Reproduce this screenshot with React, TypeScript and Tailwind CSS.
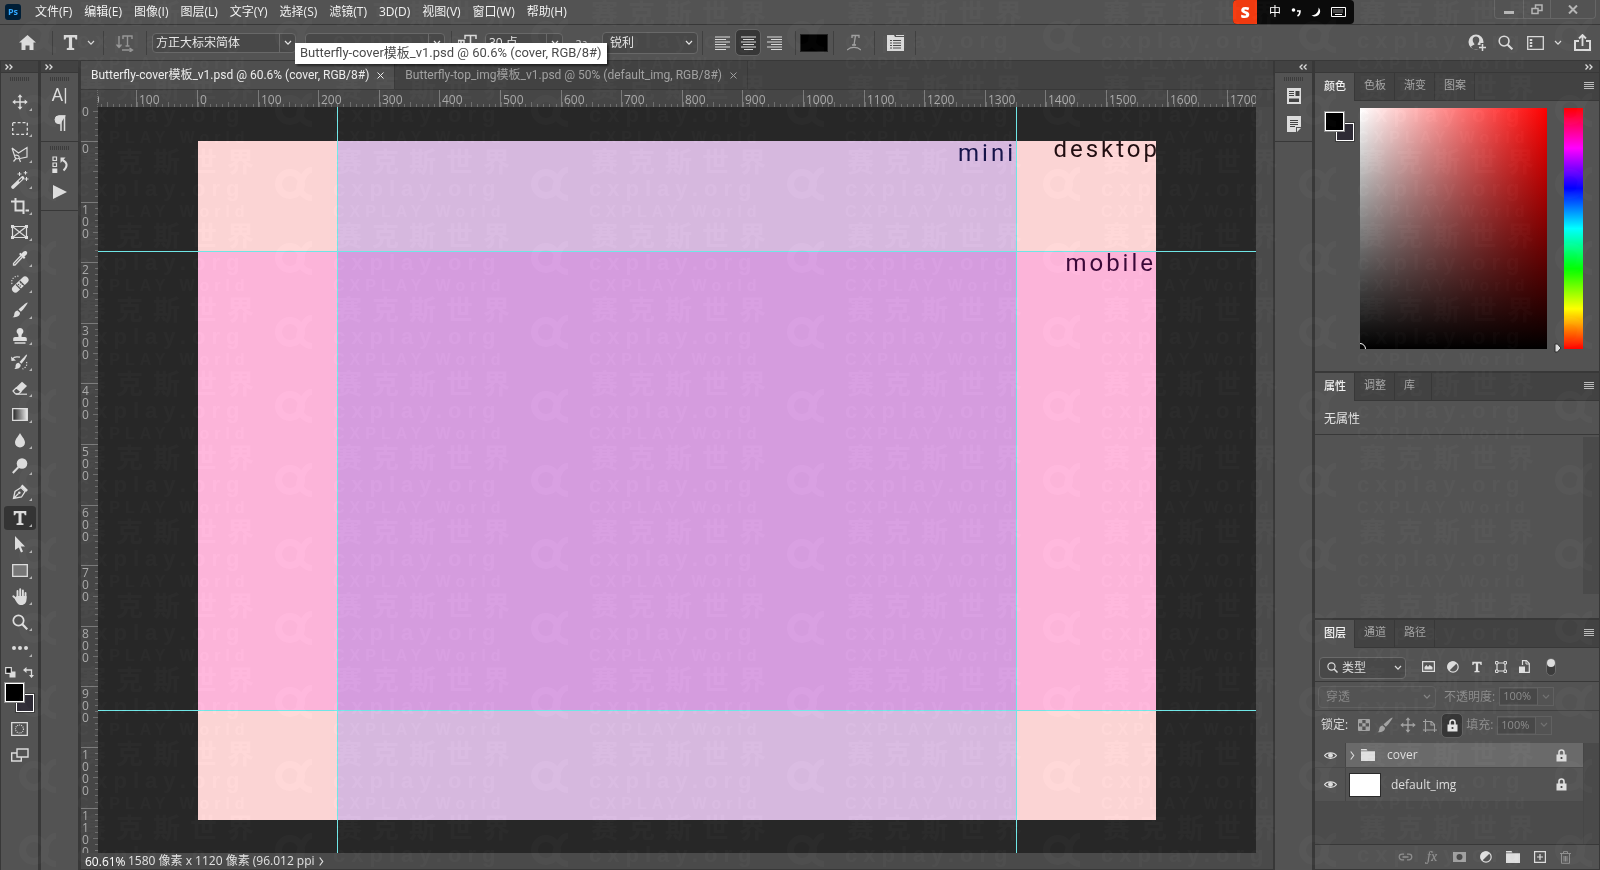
import { useState } from "react"
import type { ReactNode } from "react"
import clsx from "clsx"

const menus = ["文件(F)", "编辑(E)", "图像(I)", "图层(L)", "文字(Y)", "选择(S)", "滤镜(T)", "3D(D)", "视图(V)", "窗口(W)", "帮助(H)"]

// Canvas units per 100 document pixels at 60.6%
const STEP = 60.6

const Icon = ({ w = 18, h = 18, className = "", children }: { w?: number; h?: number; className?: string; children: ReactNode }) => (
  <svg width={w} height={h} viewBox={`0 0 ${w} ${h}`} fill="none" stroke="currentColor" strokeWidth="1.5" className={clsx("shrink-0", className)} aria-hidden="true">
    {children}
  </svg>
)

const Chevron = ({ className = "" }: { className?: string }) => (
  <Icon w={8} h={6} className={className}>
    <path d="M1 1l3 3.2L7 1" strokeWidth="1.2" />
  </Icon>
)

const DoubleChevron = ({ left = false }: { left?: boolean }) => (
  <Icon w={8} h={6} className="text-[#dcdcdc]">
    {left ? <path d="M3.5 .5L1 3l2.500 2.500M7.500 .5L5 3l2.500 2.500" strokeWidth="1.3" /> : <path d="M.5 .5L3 3 .5 5.500M4.500 .5L7 3 4.500 5.500" strokeWidth="1.3" />}
  </Icon>
)

const Grip = () => (
  <Icon w={20} h={4} className="text-[#3c3c3c]">
    <path d="M0 2h20" strokeWidth="4" strokeDasharray="1 1" />
  </Icon>
)

const Lock = () => (
  <Icon w={11} h={13}>
    <path d="M3 6V3.500a2.500 2.500 0 015 0V6" strokeWidth="1.6" />
    <path d="M.5 5.500h10v7H.5z" fill="currentColor" stroke="none" />
    <circle cx="5.500" cy="9" r="1.100" fill="#3a3a3a" stroke="none" />
  </Icon>
)

const Move = () => (
  <Icon w={16} h={16}>
    <path d="M8 2v12M2 8h12" strokeWidth="1.4" />
    <path d="M8 .3l2.500 3h-5zM8 15.700l2.500-3h-5zM.3 8l3-2.500v5zM15.700 8l-3-2.500v5z" fill="currentColor" stroke="none" />
  </Icon>
)

const Brush = () => (
  <Icon w={16} h={16}>
    <path d="M15.500 .5c.6.6-4 6.800-6.600 9.300L6.500 7.500C9 5 14.900-.1 15.500 .5zM5.700 8.400l2.300 2.300c.2 3.500-4 4.800-7.500 4.500 2-1 1.500-2.500 2-4.300.5-1.600 1.700-2.400 3.200-2.500z" fill="currentColor" stroke="none" />
  </Icon>
)

const TypeGlyph = ({ size = 16 }: { size?: number }) => (
  <svg width={size} height={size} viewBox="0 0 16 16" fill="currentColor" aria-hidden="true" className="shrink-0">
    <path d="M1.700 1h12.600v4.200h-1.500L12 3.200H9.500V13l2 .5V15h-7v-1.500l2-.5V3.200H4l-.8 2H1.700z" />
  </svg>
)

const Magnifier = ({ size = 16 }: { size?: number }) => (
  <svg width={size} height={size} viewBox="0 0 16 16" fill="none" stroke="currentColor" aria-hidden="true" className="shrink-0">
    <circle cx="6.500" cy="6.500" r="5.200" strokeWidth="1.7" />
    <path d="M10.300 10.300l5 5" strokeWidth="2.2" />
  </svg>
)

const HalfCircle = () => (
  <Icon w={12} h={12}>
    <circle cx="6" cy="6" r="5.200" strokeWidth="1.200" />
    <path d="M9.800 2.200A5.400 5.400 0 102.200 9.800z" fill="currentColor" stroke="none" />
  </Icon>
)

const Folder = () => (
  <Icon w={14} h={12}>
    <path d="M0 0h5.500l1 1.500H0zM0 2.300h14V12H0z" fill="currentColor" stroke="none" />
  </Icon>
)

const tools: { name: string; icon: ReactNode }[] = [
  { name: "移动工具", icon: <Move /> },
  { name: "矩形选框工具", icon: <Icon w={16} h={13}><path d="M.7 .7h14.600v11.600H.7z" strokeDasharray="3 1.900" strokeWidth="1.300" /></Icon> },
  { name: "多边形套索工具", icon: <Icon w={17} h={17}><path d="M1 2l6.500 5L16 1.500V11l-7 1.500M1 2l2.500 7.500M3.500 9.500c3-1 5.500 1 4.500 2.500s-4.500.5-4.500-2.500zM5 12.500l-2.500 3M8 12l1.500 4" strokeWidth="1.200" /></Icon> },
  { name: "魔棒工具", icon: <Icon w={18} h={18}><path d="M2 16L11.500 7" strokeWidth="3.600" strokeLinecap="round" /><path d="M8 10.500l3-3" stroke="#535353" strokeWidth="1.200" /><path d="M8.500 1v4M6.500 3h4M14.500 0v3.600M12.700 1.800h3.600M15.500 6v4M13.500 8h4" strokeWidth="1" /></Icon> },
  { name: "裁剪工具", icon: <Icon w={18} h={17}><path d="M0 3.500h12.500V16M4.500 0v12.500H12M14.500 12.500H18" strokeWidth="2" /></Icon> },
  { name: "图框工具", icon: <Icon w={17} h={14}><path d="M1.500 1.500h14v11h-14zM1.500 1.500l14 11M15.500 1.500l-14 11" strokeWidth="1.200" /><path d="M0 0h3v3H0zM14 0h3v3h-3zM0 11h3v3H0zM14 11h3v3h-3z" fill="currentColor" stroke="none" /></Icon> },
  { name: "吸管工具", icon: <Icon w={16} h={16}><path d="M9 5.500l-7.500 8v1.500h1.500l7.500-8" strokeWidth="1.300" /><path d="M7 4l1.500-1.300 1 1C11 1.500 13 .2 14.600 1.400c1.500 1.300.2 3.500-2.200 5.100l1 1L12 9z" fill="currentColor" stroke="none" /></Icon> },
  { name: "污点修复画笔工具", icon: <Icon w={18} h={18}><path d="M4.500 14L14 5" strokeWidth="7" strokeLinecap="round" /><path d="M5 9.500l5 5M8.800 6l5 5" stroke="#535353" strokeWidth="1.100" /><path d="M7.500 9.500h.01M9.500 7.800h.01M9.300 11h.01M11.300 9.300h.01" stroke="#535353" strokeWidth="1.500" strokeLinecap="round" /><path d="M1 9C-.5 4 4 0 8.500 1.500" strokeWidth="1.200" strokeDasharray="1.200 1.500" /></Icon> },
  { name: "画笔工具", icon: <Brush /> },
  { name: "仿制图章工具", icon: <Icon w={14} h={16}><path d="M7 0a3.300 3.300 0 012.300 5.700c-.6.6-.8 1.400-.7 3.300H12c1 0 1.800.8 1.800 1.800V13H.2v-2.200C.2 9.800 1 9 2 9h3.400c.1-1.900-.1-2.700-.7-3.300A3.300 3.300 0 017 0zM1.500 14.300h11v1.400h-11z" fill="currentColor" stroke="none" /></Icon> },
  { name: "历史记录画笔工具", icon: <Icon w={17} h={16}><path d="M16 .5c.6.6-3 6.800-5.600 9.300L8.500 8C11 5.500 15.400-.1 16 .5zM7.700 8.800l2 2c.2 3.500-3.500 4.500-6.500 4.300 2-1 1-2.500 1.500-4.100.5-1.500 1.700-2.200 3-2.200z" fill="currentColor" stroke="none" /><path d="M1.500 5C3 2.500 6 2.500 9 3.200" strokeWidth="1.200" /><path d="M0 2.500L.5 7l4.500-.5z" fill="currentColor" stroke="none" /><path d="M15.500 8c1 3-.5 5.500-4 7" strokeWidth="1.200" strokeDasharray="1.200 1.500" /></Icon> },
  { name: "橡皮擦工具", icon: <Icon w={16} h={14}><path d="M10 .8L15 5l-6 6-5-4.500z" fill="currentColor" stroke="none" /><path d="M4.300 6.800L1 10l2.500 2.800h3L9 10.700z" strokeWidth="1.200" /><path d="M4 13.200h11" strokeWidth="1.200" /></Icon> },
  { name: "渐变工具", icon: <Icon w={16} h={13}><defs><linearGradient id="tool-gradient"><stop stopColor="#222" /><stop offset="1" stopColor="#e6e6e6" /></linearGradient></defs><path d="M.7 .7h14.600v11.600H.7z" fill="url(#tool-gradient)" strokeWidth="1.300" /></Icon> },
  { name: "模糊工具", icon: <Icon w={12} h={15}><path d="M6 0c1 2.500 5 6 5 9.500a5 5 0 01-10 0C1 6 5 2.500 6 0z" fill="currentColor" stroke="none" /></Icon> },
  { name: "减淡工具", icon: <Icon w={16} h={16}><circle cx="10" cy="5.500" r="5.300" fill="currentColor" stroke="none" /><path d="M6.500 9L.8 15" strokeWidth="2" /></Icon> },
  { name: "钢笔工具", icon: <Icon w={16} h={16}><path d="M1.500 14.500L3 7.500l6-4 4 4-3.500 5.500zM1.500 14.500l5-5" strokeWidth="1.300" /><circle cx="7.300" cy="8.800" r="1.300" fill="currentColor" stroke="none" /><path d="M9.500 1.500l5.500 5.500" strokeWidth="2.600" /></Icon> },
  { name: "文字工具", icon: <TypeGlyph /> },
  { name: "路径选择工具", icon: <Icon w={12} h={17}><path d="M1 0l10 10.500H6.800l2.200 5-2 .9-2.200-5L1 14z" fill="currentColor" stroke="none" /></Icon> },
  { name: "矩形工具", icon: <Icon w={16} h={13}><path d="M.7 .7h14.600v11.600H.7z" fill="#777" strokeWidth="1.300" /></Icon> },
  { name: "抓手工具", icon: <Icon w={16} h={17}><path d="M5.500 9V3M8.200 8.500V1.200M10.900 9V2.500M13.500 10V5M5.500 12L1.300 8.300" strokeWidth="1.900" strokeLinecap="round" /><path d="M4.500 8h10v3.500c0 3-2 5.500-5 5.500-3.500 0-4.500-2-6.500-5.500z" fill="currentColor" stroke="none" /></Icon> },
  { name: "缩放工具", icon: <Magnifier /> },
  { name: "编辑工具栏", icon: <Icon w={16} h={4}><path d="M2 2h.01M8 2h.01M14 2h.01" strokeWidth="4" strokeLinecap="round" /></Icon> },
]

function Dropdown({ label, value, className, split = false, dim = false }: { label: string; value: string; className: string; split?: boolean; dim?: boolean }) {
  return (
    <div className={clsx("relative flex shrink-0 items-center rounded-sm border", dim ? "border-[#606060] text-[#868686]" : "border-[#686868] bg-[#484848] text-[#e4e4e4]", className)}>
      <select aria-label={label} className={clsx("h-full w-full appearance-none truncate bg-transparent pr-4 outline-none", split ? "pl-[3px]" : "pl-[7px]")}>
        <option>{value}</option>
      </select>
      <span className={clsx("pointer-events-none absolute inset-y-0 right-0 flex w-4 items-center justify-center", split && "border-l border-[#686868]")}>
        <Chevron />
      </span>
    </div>
  )
}

function Percent({ id, label }: { id: string; label: string }) {
  return (
    <div className="flex shrink-0 items-center gap-1 text-[#8c8c8c]">
      <label htmlFor={id} className="text-xs">{label}</label>
      <div className="flex h-[19px] w-[55px] items-center border border-[#616161]">
        <input id={id} defaultValue="100%" className="h-[15px] w-[37px] bg-[#484848] px-[3px] text-[11px] outline-none" />
        <span className="flex h-full flex-1 items-center justify-center border-l border-[#616161] text-[#727272]"><Chevron /></span>
      </div>
    </div>
  )
}

const Divider = ({ className = "" }: { className?: string }) => <span className={clsx("h-6 w-px shrink-0 bg-[#404040]", className)} />

function MenuBar() {
  return (
    <header className="flex h-[25px] shrink-0 items-center border-b border-[#383838] pl-[5px]">
      <span className="flex size-4 items-center justify-center rounded-[3px] bg-[#001e36] text-[9px] font-bold text-[#31a8ff]">Ps</span>
      <nav className="flex items-center gap-3 pl-[14px] text-xs text-[#f0f0f0]">
        {menus.map((m) => <button key={m} className="whitespace-nowrap">{m}</button>)}
      </nav>
      <div className="ml-auto mr-[140px] flex h-6 w-[121px] items-center overflow-hidden rounded-sm bg-[#0b0b0b] text-white">
        <span className="flex h-full w-6 items-center justify-center bg-[#f03a10] text-base font-extrabold">S</span>
        <div className="flex flex-1 items-center justify-between pl-3 pr-2 text-xs">
          <span>中</span>
          <Icon w={10} h={10}><circle cx="2.500" cy="3" r="1.800" fill="currentColor" stroke="none" /><path d="M6 4h3c0 2.500-.8 4-2.500 5" strokeWidth="1.600" /></Icon>
          <Icon w={10} h={10}><path d="M7.500 .5C12 5 6.500 12 .5 8.500 5 8 8 5 7.500 .5z" fill="currentColor" stroke="none" /></Icon>
          <Icon w={15} h={10}><path d="M.5 .5h14v9H.5z" strokeWidth="1" /><path d="M2.500 3h10M2.500 5h10" strokeDasharray="1 1" strokeWidth="1" /><path d="M4 7.500h7" strokeWidth="1" /></Icon>
        </div>
      </div>
      <div className="mr-1 flex h-[19px] w-[102px] shrink-0 self-start rounded-b-sm border border-t-0 border-[#666] text-[#b5b5b5]">
        <button aria-label="最小化" className="flex w-7 items-end justify-center pb-1"><span className="h-[3px] w-[10px] bg-[#b5b5b5]" /></button>
        <button aria-label="还原" className="flex w-7 items-center justify-center border-x border-[#666]">
          <Icon w={12} h={11}><path d="M1 4.500h6v5H1zM4.500 4V1h6.500v5.500H7.500" /></Icon>
        </button>
        <button aria-label="关闭" className="flex flex-1 items-center justify-center">
          <Icon w={10} h={9}><path d="M1 .5l8 8M9 .5l-8 8" strokeWidth="2" /></Icon>
        </button>
      </div>
    </header>
  )
}

const alignIcons = [
  { name: "左对齐文本", d: "M0 1h15M0 3.500h11M0 6h15M0 8.500h11M0 11h15M0 13.500h11" },
  { name: "居中对齐文本", d: "M0 1h15M2 3.500h11M0 6h15M2 8.500h11M0 11h15M3 13.500h9" },
  { name: "右对齐文本", d: "M0 1h15M4 3.500h11M0 6h15M4 8.500h11M0 11h15M4 13.500h11" },
]

function OptionsBar() {
  const [align, setAlign] = useState(1)
  return (
    <div className="relative flex h-9 shrink-0 items-center border-b border-[#383838] text-xs text-[#d9d9d9]">
      <button aria-label="主页" className="ml-[19px]">
        <Icon w={17} h={15}><path d="M8.500 0L17 7.500h-2.500V15h-4v-4.500h-4V15h-4V7.500H0z" fill="currentColor" stroke="none" /></Icon>
      </button>
      <Divider className="ml-4" />
      <button aria-label="文字工具预设" className="ml-[9px] flex items-center gap-2"><TypeGlyph size={17} /><Chevron /></button>
      <Divider className="ml-2" />
      <button aria-label="切换文本取向" className="ml-3 text-[#969696]">
        <Icon w={18} h={18}><path d="M3 2v11M.5 10.500L3 13.500l2.500-3M7 5V2h9v3M11.500 2v10M9.500 12h4M6 16h10M13.500 14l3 2-3 2" strokeWidth="1.400" /></Icon>
      </button>
      <Divider className="ml-3 mr-[5px]" />
      <Dropdown label="字体系列" value="方正大标宋简体" className="h-5 w-36" split />
      <Dropdown label="字体样式" value="-" className="ml-[9px] h-5 w-[140px]" split />
      <Divider className="mx-[6px]" />
      <Icon w={19} h={17}><path d="M7 5V1.500h11V5M12.500 1.500v13M10 15h5M0 9V6.500h6V9M3 6.500v8" /></Icon>
      <Dropdown label="字体大小" value="30 点" className="ml-2 h-5 w-[78px]" split />
      <span className="ml-3 w-4 text-xs text-[#d9d9d9]">a<span className="text-[10px]">a</span></span>
      <Dropdown label="消除锯齿" value="锐利" className="ml-[11px] h-[22px] w-24" />
      <Divider className="ml-1 mr-[7px]" />
      {alignIcons.map((a, i) => (
        <button key={a.name} aria-label={a.name} onClick={() => setAlign(i)} className={clsx("mr-[2px] flex h-[25px] w-6 items-center justify-center rounded-sm", align === i && "bg-[#373737] outline outline-[#646464]")}>
          <Icon w={15} h={14}><path d={a.d} strokeWidth="1.200" /></Icon>
        </button>
      ))}
      <Divider className="ml-[7px] mr-1" />
      <button aria-label="文本颜色" className="h-[18px] w-7 border border-[#222] bg-black" />
      <Divider className="ml-[5px]" />
      <button aria-label="创建文字变形" className="ml-[13px] text-[#a0a0a0]">
        <Icon w={14} h={17}><path d="M5 4V1.500h7V4M8.500 1.500L7 11M5 11h4M0 16c4-3.500 10-3.500 14 0" strokeWidth="1.300" /></Icon>
      </button>
      <Divider className="ml-[13px] mr-3" />
      <button aria-label="字符和段落面板">
        <Icon w={17} h={16}><path d="M0 0h7l1 2h9v14H0z" fill="currentColor" stroke="none" /><path d="M9 .5h8" strokeWidth="1" /><path d="M3 5.500h2M6 5.500h8M3 8h2M6 8h8M3 10.500h2M6 10.500h8M3 13h2M6 13h8" stroke="#4a4a4a" strokeWidth="1" /></Icon>
      </button>
      <Divider className="ml-[11px]" />
      <div className="ml-auto flex items-center pr-[9px]">
        <button aria-label="帐户">
          <Icon w={18} h={17}>
            <circle cx="8" cy="8" r="7.500" fill="currentColor" stroke="none" />
            <path d="M8 2.500c2 0 3.300 1.500 3.300 3.500S10 9.500 9.500 10c0 1.300 3 1.300 3.500 3l-2 2.200H5L3 13c.5-1.700 3.500-1.700 3.500-3C6 9.500 4.700 8 4.700 6S6 2.500 8 2.500z" fill="#535353" stroke="none" />
            <path d="M14.500 9v8M10.500 13h8" stroke="#535353" strokeWidth="4" />
            <path d="M14.500 10v7M11 13.500h7" />
          </Icon>
        </button>
        <button aria-label="搜索" className="ml-3"><Magnifier size={15} /></button>
        <button aria-label="工作区" className="ml-[14px] flex items-center gap-[10px]"><Icon w={17} h={14}><path d="M.7 .7h15.600v12.600H.7z" strokeWidth="1.300" /><path d="M4 3v8" strokeWidth="2.500" strokeDasharray="2 1" /></Icon><Chevron /></button>
        <button aria-label="共享" className="ml-3"><Icon w={17} h={17}><path d="M5 7H1v9h15V7h-4" strokeWidth="2" /><path d="M8.500 12V2M5 4.500L8.500 1 12 4.500" strokeWidth="1.800" /></Icon></button>
      </div>
      <div role="tooltip" className="absolute left-[295px] top-[18px] z-20 h-[21px] whitespace-nowrap bg-white px-[5px] text-[13px] leading-5 text-[#4a4a4a] shadow-[2px_2px_2px_rgba(0,0,0,0.5)] [font-family:Roboto,'Noto_Sans_CJK_SC',sans-serif]">
        Butterfly-cover模板_v1.psd @ 60.6% (cover, RGB/8#)
      </div>
    </div>
  )
}

function ToolBar() {
  const [active, setActive] = useState("文字工具")
  return (
    <aside className="flex w-10 shrink-0 flex-col items-center border-l border-r-2 border-[#383838] text-[#dcdcdc]">
      <div className="flex h-3 w-full shrink-0 items-center border-b border-[#383838] bg-[#424242] pl-1"><DoubleChevron /></div>
      <div className="flex h-4 shrink-0 items-start pt-1"><Grip /></div>
      {tools.map((t) => (
        <button key={t.name} aria-label={t.name} onClick={() => setActive(t.name)} className={clsx("relative flex h-[26px] w-8 shrink-0 items-center justify-center rounded-sm bg-clip-content py-px", active === t.name && "bg-[#343434]")}>
          {t.icon}
          <span className="absolute bottom-1 right-1 border-b-[3px] border-l-[3px] border-b-[#b4b4b4] border-l-transparent" />
        </button>
      ))}
      <div className="flex h-[22px] w-full shrink-0 items-center justify-between px-1">
        <Icon w={11} h={11}><path d="M4.500 4.500h6v6h-6z" fill="currentColor" stroke="none" /><path d="M.7 .7h5.600v5.600H.7z" fill="#111" strokeWidth="1.200" /></Icon>
        <Icon w={11} h={11}><path d="M2 3h6.500v6" strokeWidth="1.300" /><path d="M0 3l3.500-3v6zM8.500 11l-2.500-3h5z" fill="currentColor" stroke="none" /></Icon>
      </div>
      <ColorSwatch className="mb-[2px]" />
      <div className="flex h-[26px] shrink-0 items-center pt-1">
        <Icon w={17} h={14}><path d="M.7 .7h15.600v12.600H.7z" strokeWidth="1.300" /><circle cx="8.500" cy="7" r="4" strokeWidth="1.200" strokeDasharray="1 1" /></Icon>
      </div>
      <div className="flex h-[26px] shrink-0 items-center pt-1">
        <Icon w={18} h={14}><path d="M6 5H.7v8h9.600V9" strokeWidth="1.400" /><path d="M6 1h11v8H6z" strokeWidth="1.400" /></Icon>
      </div>
    </aside>
  )
}

function ColorSwatch({ className = "" }: { className?: string }) {
  return (
    <div className={clsx("flex w-[29px] shrink-0 flex-col", className)}>
      <button aria-label="前景色" className="z-10 size-[19px] border border-white bg-black outline outline-[#8c8c8c]" />
      <button aria-label="背景色" className="-mt-2 size-[18px] self-end border border-white bg-[#2e2b35] outline outline-[#3a3a3a]" />
    </div>
  )
}

function SidePanels() {
  return (
    <aside className="flex w-10 shrink-0 flex-col border-l border-r-2 border-[#383838] text-[#dcdcdc]">
      <div className="flex h-3 shrink-0 items-center border-b border-[#383838] bg-[#424242] pl-1"><DoubleChevron /></div>
      <div className="flex h-[69px] shrink-0 flex-col items-center border-b border-[#383838] pt-1">
        <Grip />
        <button aria-label="字符" className="h-7 text-lg leading-7 [font-family:Roboto,sans-serif]">A|</button>
        <button aria-label="段落" className="flex h-7 items-center"><Icon w={12} h={16}><path d="M11.500 .7H5a4 4 0 000 8h1.500" fill="currentColor" strokeWidth="1" /><path d="M7 1v15M10.500 1v15" strokeWidth="1.500" /></Icon></button>
      </div>
      <div className="flex h-[69px] shrink-0 flex-col items-center border-b border-[#383838] pt-1">
        <Grip />
        <button aria-label="历史记录" className="flex h-7 items-center"><Icon w={16} h={17}><path d="M1 1h3.500v3.500H1zM1 7h3.500v3.500H1z" strokeWidth="1.200" /><path d="M.3 12.500h5V17h-5z" fill="currentColor" stroke="none" /><path d="M8.500 1.500h5L8.500 7z" fill="currentColor" stroke="none" /><path d="M10.500 4c5 2.500 5.500 6.500 1 10.500" strokeWidth="2" /></Icon></button>
        <button aria-label="动作" className="flex h-7 items-center"><Icon w={14} h={14}><path d="M0 0l14 7-14 7z" fill="currentColor" stroke="none" /></Icon></button>
      </div>
    </aside>
  )
}

const minorTicks = Array.from({ length: 220 }, (_, i) => i - 20)
const majorTicks = Array.from({ length: 21 }, (_, i) => i - 2)

function HorizontalRuler() {
  return (
    <svg className="h-[17px] min-w-0 flex-1 text-xs" aria-hidden="true">
      {minorTicks.map((n) => <path key={n} d={`M${Math.round(100 + (n * STEP) / 10) + 0.5} ${n % 5 ? 14 : 12}v6`} stroke="#6e6e6e" />)}
      {majorTicks.map((n) => {
        const x = Math.round(99 + n * STEP)
        return (
          <g key={n}>
            <path d={`M${x + 0.5} 0v17`} stroke="#7a7a7a" />
            <text x={x + 3} y="14" fill="#a8a8a8">{Math.abs(n * 100)}</text>
          </g>
        )
      })}
    </svg>
  )
}

function VerticalRuler() {
  return (
    <svg className="h-full w-[17px] shrink-0 text-xs" aria-hidden="true">
      {minorTicks.map((n) => <path key={n} d={`M${n % 5 ? 14 : 12} ${Math.round(34 + (n * STEP) / 10) + 0.5}h6`} stroke="#6e6e6e" />)}
      {majorTicks.map((n) => {
        const y = Math.round(34 + n * STEP)
        return (
          <g key={n}>
            <path d={`M0 ${y + 0.5}h17`} stroke="#7a7a7a" />
            {String(Math.abs(n * 100)).split("").map((digit, i) => (
              <text key={i} x="1" y={y + 12 + i * 12} fill="#a8a8a8">{digit}</text>
            ))}
          </g>
        )
      })}
    </svg>
  )
}

// Cover template: safe areas for desktop, mobile and mini crops
function Artboard() {
  return (
    <div className="absolute left-[100px] top-[34px] grid h-[679px] w-[958px] grid-cols-[139px_1fr_140px] grid-rows-[110px_1fr_110px] overflow-hidden text-2xl leading-none tracking-[3px] [font-family:Roboto,sans-serif]">
      <div className="bg-[#fbd4d4]" />
      <div className="flex justify-end bg-[#d6b8de] text-[#141248]">mini</div>
      <div className="flex justify-end bg-[#fbd4d4] text-[#200d10]"><span className="-mt-1 -mr-1">desktop</span></div>
      <div className="bg-[#fcb4d9]" />
      <div className="bg-[#d59cde]" />
      <div className="flex justify-end bg-[#fcb4d9] text-[#3a0838]">mobile</div>
      <div className="bg-[#fbd4d4]" />
      <div className="bg-[#d6b8de]" />
      <div className="bg-[#fbd4d4]" />
    </div>
  )
}

const docs = ["Butterfly-cover模板_v1.psd @ 60.6% (cover, RGB/8#)", "Butterfly-top_img模板_v1.psd @ 50% (default_img, RGB/8#)"]

function DocumentArea() {
  return (
    <main className="flex min-w-0 flex-1 flex-col border-l border-[#383838] bg-[#4a4a4a]">
      <div className="flex h-[29px] shrink-0 border-b border-[#383838] bg-[#424242] text-xs [font-family:Roboto,'Noto_Sans_CJK_SC',sans-serif]">
        {docs.map((d, i) => (
          <div key={d} className={clsx("flex items-center gap-2 border-r border-[#383838] px-[10px]", i === 0 ? "bg-[#4f4f4f] text-[#ececec]" : "text-[#a0a0a0]")}>
            <button className="whitespace-nowrap">{d}</button>
            <button aria-label="关闭文档"><Icon w={7} h={7}><path d="M.5 .5l6 6M6.500 .5l-6 6" strokeWidth="1" /></Icon></button>
          </div>
        ))}
      </div>
      <div className="flex h-[17px] shrink-0 bg-[#464646] pr-[17px]">
        <span className="w-[17px] shrink-0 border-r border-dotted border-[#6a6a6a]" />
        <HorizontalRuler />
      </div>
      <div className="flex min-h-0 flex-1 bg-[#464646]">
        <VerticalRuler />
        <div className="relative min-w-0 flex-1 overflow-hidden bg-[#272727]">
          <Artboard />
          <span className="absolute inset-y-0 left-[239px] w-px bg-[#6fe6e6]" />
          <span className="absolute inset-y-0 left-[918px] w-px bg-[#6fe6e6]" />
          <span className="absolute inset-x-0 top-[144px] h-px bg-[#6fe6e6]" />
          <span className="absolute inset-x-0 top-[603px] h-px bg-[#6fe6e6]" />
        </div>
        <div className="w-[17px] shrink-0 bg-[#4a4a4a]" />
      </div>
      <footer className="flex h-[17px] shrink-0 items-center border-b border-[#383838] text-xs leading-none text-[#e0e0e0]">
        <input aria-label="缩放比例" defaultValue="60.61%" className="w-[47px] bg-transparent pl-1 text-white outline-none" />
        <button className="flex items-center gap-1 whitespace-nowrap">1580 像素 x 1120 像素 (96.012 ppi <Icon w={5} h={9}><path d="M.7 .5l3 4-3 4" strokeWidth="1.200" /></Icon></button>
      </footer>
    </main>
  )
}

function Dock() {
  return (
    <aside className="flex w-[41px] shrink-0 flex-col border-x-2 border-[#383838] text-[#dcdcdc]">
      <div className="flex h-3 shrink-0 items-center justify-end border-b border-[#383838] bg-[#424242] pr-[5px]"><DoubleChevron left /></div>
      <div className="flex h-[69px] shrink-0 flex-col items-center border-b border-[#383838] pt-1">
        <Grip />
        <button aria-label="学习" className="mt-px flex h-7 items-center"><Icon w={14} h={16}><path d="M0 0h14v16H0z" fill="currentColor" stroke="none" /><path d="M2 3.500h5M2 5.500h5M2 7.500h5" stroke="#444" strokeWidth="1" /><path d="M8.500 3h4v5h-4zM2 10.500h10V14H2z" fill="#444" stroke="none" /></Icon></button>
        <button aria-label="注释" className="flex h-7 items-center"><Icon w={14} h={16}><path d="M0 0h14v11h-5v5H0zM10 16v-4h4z" fill="currentColor" stroke="none" /><path d="M3 4.500h8M3 6.500h8M3 8.500h8M3 10.500h5" stroke="#444" strokeWidth="1" /></Icon></button>
      </div>
    </aside>
  )
}

function PanelTabs({ tabs }: { tabs: string[] }) {
  return (
    <div className="flex h-7 shrink-0 border-b border-[#383838] bg-[#424242] text-[11px] text-[#a4a4a4]">
      {tabs.map((t, i) => (
        <button key={t} className={clsx("-mb-px min-w-[37px] shrink-0 border-r border-[#383838] pb-[2px] pl-[9px] pr-2 text-left", i === 0 ? "bg-[#535353] font-medium text-[#f2f2f2]" : "border-b")}>{t}</button>
      ))}
      <button aria-label="面板菜单" className="ml-auto mr-[5px] pb-px text-[#bcbcbc]">
        <Icon w={10} h={8}><path d="M0 .5h10M0 2.500h10M0 4.500h10M0 6.500h10" strokeWidth="1" /></Icon>
      </button>
    </div>
  )
}

function ColorPanel() {
  return (
    <section className="flex h-[300px] shrink-0 flex-col border-b-2 border-[#383838]">
      <PanelTabs tabs={["颜色", "色板", "渐变", "图案"]} />
      <div className="flex pl-[10px] pr-4 pt-[7px]">
        <ColorSwatch className="mt-1" />
        <div className="ml-[6px] h-[241px] flex-1 overflow-hidden bg-[linear-gradient(to_top,#000,transparent),linear-gradient(to_right,#fff,#f00)]">
          <div className="relative top-full -ml-[6px] -mt-[6px] size-3 rounded-full border border-white" />
        </div>
        <div className="flex w-[17px] items-end justify-end pr-[2px] text-[#dcdcdc]">
          <Icon w={8} h={10} className="-mb-1"><path d="M1 1h2.500L7 5 3.500 9H1z" fill="currentColor" stroke="#2c2c2c" strokeWidth="1" /></Icon>
        </div>
        <div className="h-[241px] w-[19px] bg-[linear-gradient(to_bottom,#f00,#f0f,#00f,#0ff,#0f0,#ff0,#f00)]" />
      </div>
    </section>
  )
}

function PropertiesPanel() {
  return (
    <section className="flex h-[247px] shrink-0 flex-col border-b-2 border-[#383838]">
      <PanelTabs tabs={["属性", "调整", "库"]} />
      <p className="h-[34px] shrink-0 border-b border-[#383838] pl-[9px] text-xs leading-9 text-[#e0e0e0]">无属性</p>
      <div className="flex flex-1 justify-end pt-[2px]"><div className="h-[157px] w-4 bg-[#4a4a4a]" /></div>
    </section>
  )
}

const layers = [
  { name: "cover", group: true, row: "h-[25px]", cell: "bg-[#6a6a6a]" },
  { name: "default_img", group: false, row: "h-[34px]", cell: "" },
]

function LayersPanel() {
  return (
    <section className="flex min-h-0 flex-1 flex-col text-[#dcdcdc]">
      <PanelTabs tabs={["图层", "通道", "路径"]} />
      <div className="flex h-[34px] shrink-0 items-center border-b border-[#383838] pl-1 pt-[6px]">
        <div className="relative flex h-[22px] w-[87px] items-center rounded-sm border border-[#6a6a6a] bg-[#484848] pl-[7px]">
          <Magnifier size={11} />
          <select aria-label="图层筛选" className="ml-1 h-full flex-1 appearance-none bg-transparent text-xs outline-none"><option>类型</option></select>
          <Chevron className="pointer-events-none absolute right-[3px]" />
        </div>
        <div className="flex flex-1 items-center gap-3 pb-[2px] pl-4">
          <Icon w={13} h={11}><path d="M.6 .6h11.800v9.800H.6z" strokeWidth="1.200" /><path d="M2.500 8.500V6l2-2 1.500 2 1.500-2L10.500 6v2.500z" fill="currentColor" stroke="none" /></Icon>
          <HalfCircle />
          <TypeGlyph size={12} />
          <Icon w={12} h={12}><path d="M2 2h8v8H2z" strokeWidth="1.200" /><path d="M.5 .5h2.500v2.500H.5zM9 .5h2.500v2.500H9zM.5 9h2.500v2.500H.5zM9 9h2.500v2.500H9z" fill="#535353" strokeWidth="1" /></Icon>
          <Icon w={11} h={13}><path d="M3.500 5V.7h4L10.300 3.500v8.800H6" strokeWidth="1.200" /><path d="M7 .7V4h3.300" strokeWidth="1" /><path d="M0 6.500h6V13H0z" fill="currentColor" stroke="none" /></Icon>
          <button role="switch" aria-checked="true" aria-label="图层过滤" className="ml-1 flex h-[18px] w-[10px] items-start rounded-full border border-[#6a6a6a] bg-[#3c3c3c]"><span className="size-2 rounded-full bg-[#dcdcdc]" /></button>
        </div>
      </div>
      <div className="flex h-[29px] shrink-0 items-center gap-2 border-b border-[#404040] pl-[3px] pt-px">
        <Dropdown label="混合模式" value="穿透" className="h-[22px] w-[118px] text-xs" dim />
        <Percent id="opacity" label="不透明度:" />
      </div>
      <div className="flex h-8 shrink-0 items-center pb-1 pl-[6px]">
        <span className="text-xs">锁定:</span>
        <div className="flex flex-1 items-center text-[#a2a2a2]">
          <div className="flex items-center gap-[7px] pl-[10px] pr-[5px]">
            <Icon w={12} h={12}><path d="M.5 .5h11v11H.5z" strokeWidth="1" /><path d="M1 1h3.300v3.300H1zM7.600 1H11v3.300H7.600zM4.300 4.300h3.300v3.300H4.300zM1 7.600h3.300V11H1zM7.600 7.600H11V11H7.600z" fill="currentColor" stroke="none" /></Icon>
            <Brush />
            <Move />
            <Icon w={14} h={13}><path d="M2.500 0v13M0 2.500h8.500l3 3V13M0 11h14M8 2.500V6h3.500" strokeWidth="1.100" /></Icon>
          </div>
          <button aria-label="全部锁定" className="flex h-[23px] w-5 items-center justify-center rounded-sm bg-[#363636] text-[#e4e4e4] outline outline-[#606060]"><Lock /></button>
          <div className="pl-1"><Percent id="fill" label="填充:" /></div>
        </div>
      </div>
      <div className="flex min-h-0 flex-1 border-b border-[#383838] bg-[#4b4b4b]">
        <ul className="flex-1 text-xs">
          {layers.map((l) => (
            <li key={l.name} className={clsx("flex border-b border-[#4a4a4a] bg-[#535353]", l.row)}>
              <button aria-label={`显示 ${l.name}`} className="flex w-[31px] shrink-0 items-center justify-center border-r border-[#464646]">
                <Icon w={13} h={9}><path d="M.5 4.500C3 .8 10 .8 12.500 4.500 10 8.200 3 8.200.5 4.500z" strokeWidth="1.200" /><circle cx="6.500" cy="4.300" r="2.400" fill="currentColor" stroke="none" /></Icon>
              </button>
              <div className={clsx("flex min-w-0 flex-1 items-center pr-4", l.cell)}>
                {l.group ? (
                  <>
                    <Icon w={5} h={9} className="ml-1 mr-[6px]"><path d="M.7 .5l3 4-3 4" strokeWidth="1.100" /></Icon>
                    <Folder />
                  </>
                ) : (
                  <span className="ml-[3px] h-6 w-8 border border-[#2a2a2a] bg-white" />
                )}
                <span className={clsx("flex-1", l.group ? "pl-3" : "pl-[10px]")}>{l.name}</span>
                <Lock />
              </div>
            </li>
          ))}
        </ul>
        <div className="w-4 shrink-0 border-l border-[#464646] bg-[#4a4a4a]" />
      </div>
      <div className="flex h-[25px] shrink-0 items-center justify-end gap-[14px] border-b border-[#383838] pr-7">
        <Icon w={15} h={8} className="text-[#8e8e8e]"><path d="M6 6.800H4A2.800 2.800 0 014 1.200h2M9 1.200h2a2.800 2.800 0 010 5.600H9M4.500 4h6" strokeWidth="1.300" /></Icon>
        <span className="w-3 font-serif text-sm italic leading-none text-[#8e8e8e]">fx</span>
        <Icon w={13} h={10} className="text-[#a0a0a0]"><path d="M0 0h13v10H0z" fill="currentColor" stroke="none" /><circle cx="6.500" cy="5" r="3" fill="#4a4a4a" stroke="none" /></Icon>
        <HalfCircle />
        <Folder />
        <Icon w={12} h={12}><path d="M.6 .6h10.800v10.800H.6zM6 3v6M3 6h6" strokeWidth="1.200" /></Icon>
        <Icon w={11} h={13} className="text-[#8e8e8e]"><path d="M0 2.500h11M3.500 2V.6h4V2M1.500 2.500v9.800h8V2.500M4 5v5.500M5.500 5v5.500M7 5v5.500" strokeWidth="1" /></Icon>
      </div>
    </section>
  )
}

function Watermark() {
  return (
    <svg className="pointer-events-none absolute inset-0 z-30 h-full w-full mix-blend-plus-lighter [font-family:'Liberation_Sans','Noto_Sans_CJK_SC',sans-serif]" aria-hidden="true">
      <defs>
        <pattern id="watermark" x="0" y="0" width="256" height="74" patternUnits="userSpaceOnUse">
          <circle cx="34" cy="36" r="11.500" fill="none" stroke="#fff" strokeWidth="7" />
          <path d="M56 22c-7 0-9 8-12 14s5 14 12 14" fill="none" stroke="#fff" strokeWidth="6" />
          <g fill="#fff" fontWeight="bold">
            <text x="79" y="24" fontSize="27" letterSpacing="10">赛克斯世界</text>
            <text x="77" y="48" fontSize="22" letterSpacing="6">cxplay.org</text>
            <text x="77" y="69" fontSize="16" letterSpacing="5">CXPLAY World</text>
          </g>
        </pattern>
      </defs>
      <rect width="100%" height="100%" fill="url(#watermark)" opacity=".016" />
    </svg>
  )
}

export default function App() {
  return (
    <div className="relative flex h-screen flex-col overflow-hidden bg-[#535353] [font-family:'Open_Sans','Noto_Sans_CJK_SC',sans-serif]">
      <MenuBar />
      <OptionsBar />
      <div className="flex min-h-0 flex-1">
        <ToolBar />
        <SidePanels />
        <DocumentArea />
        <Dock />
        <aside className="flex w-[286px] shrink-0 flex-col border-x border-[#383838]">
          <div className="flex h-3 shrink-0 items-center justify-end border-b border-[#383838] bg-[#424242] pr-[6px]"><DoubleChevron /></div>
          <ColorPanel />
          <PropertiesPanel />
          <LayersPanel />
        </aside>
      </div>
      <Watermark />
    </div>
  )
}
